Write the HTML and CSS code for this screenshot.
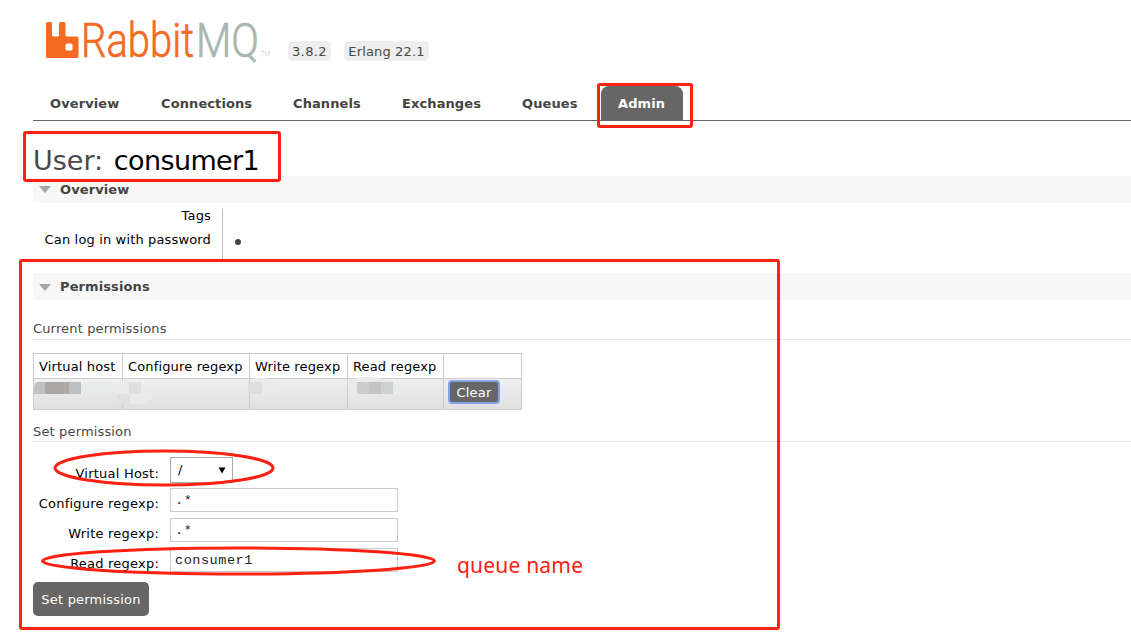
FILE: index.html
```html
<!DOCTYPE html>
<html lang="en">
<head>
<meta charset="utf-8">
<title>RabbitMQ Management</title>
<link rel="stylesheet" href="styles.css">
</head>
<body>
<header class="header">
  <svg class="logo" width="230" height="52" viewBox="0 0 230 52">
    <path fill="#f56a23" d="M1 8.500Q1 7 2.500 7H6Q7 7 7 8.500V20Q7 21.500 8.500 21.500H12.500Q14 21.500 14 20V8.500Q14 7 15.500 7H19Q20.500 7 20.500 8.500V20Q20.500 21.500 22 21.500H32Q33.500 21.500 33.500 23V41.500Q33.500 43 32 43H2.500Q1 43 1 41.500ZM22 28.500Q20.500 28.500 20.500 30V34Q20.500 35.500 22 35.500H26Q27.500 35.500 27.500 34V30Q27.500 28.500 26 28.500Z" fill-rule="evenodd"/>
    <text class="logo-rabbit" x="36" y="42" textLength="113" lengthAdjust="spacingAndGlyphs">Rabbit</text>
    <text class="logo-mq" x="151" y="42" textLength="63" lengthAdjust="spacingAndGlyphs">MQ</text>
    <text class="logo-tm" x="216" y="41" textLength="9" lengthAdjust="spacingAndGlyphs">TM</text>
  </svg>
  <span class="badge badge-version">3.8.2</span>
  <span class="badge badge-erlang">Erlang 22.1</span>
</header>
<nav class="tabs">
  <a class="tab w-overview">Overview</a>
  <a class="tab w-connections">Connections</a>
  <a class="tab w-channels">Channels</a>
  <a class="tab w-exchanges">Exchanges</a>
  <a class="tab w-queues">Queues</a>
  <a class="tab tab-active">Admin</a>
</nav>
<main class="main">
  <h1 class="title">User: <b>consumer1</b></h1>
  <h2 class="section">Overview</h2>
  <div class="facts">
    <div class="fact-names"><span class="tags">Tags</span><span>Can log in with password</span></div>
    <div class="fact-values"><i class="dot"></i></div>
  </div>
  <h2 class="section section-low">Permissions</h2>
  <h3 class="sub sub-current">Current permissions</h3>
  <table class="permissions">
    <colgroup><col class="c1"><col class="c2"><col class="c3"><col class="c4"><col class="c5"></colgroup>
    <tr><th>Virtual host</th><th>Configure regexp</th><th>Write regexp</th><th>Read regexp</th><th></th></tr>
    <tr class="row">
      <td><span class="mask"><i class="m1"></i><i class="m2"></i><i class="m3"></i></span></td>
      <td><span class="mask mask-b"><i class="m5"></i></span></td>
      <td><span class="mask mask-c"><i class="m6"></i></span></td>
      <td><span class="mask mask-d"><i class="m4"></i><i class="m3b"></i><i class="m4b"></i></span></td>
      <td><button class="clear">Clear</button></td>
    </tr>
  </table>
  <h3 class="sub sub-set">Set permission</h3>
  <form class="form">
    <label class="label-host">Virtual Host:</label><div class="select"><span>/</span><svg width="8" height="7" viewBox="0 0 8 7"><path d="M.5 .5h7L4 6.500z"/></svg></div>
    <label>Configure regexp:</label><div class="input">.*</div>
    <label>Write regexp:</label><div class="input">.*</div>
    <label>Read regexp:</label><div class="input">consumer1</div>
  </form>
  <button class="submit">Set permission</button>
</main>
<svg class="annotations" width="1131" height="634" viewBox="0 0 1131 634">
  <g fill="#e9eaea">
    <rect x="81" y="382" width="34" height="12" rx="4"/>
    <path d="M121 381h8v13h-12v-7q0-5 4-6z"/>
    <path fill="#e0e0e0" d="M117 394h12v11h-7q-5-3-5-7z"/>
    <path d="M129 394h23q-1 10-14 10h-9z"/>
    <path d="M250 380q7-4 18-1l12 3v11h-18v-11h-12z"/>
    <path fill="#dedede" d="M248 382h5v12h-5z"/>
    <path d="M350 381q9-6 25-4l20 5q7 1 9 7-1 5-11 5v-12h-36v12h-7q-3-6 0-13z"/>
  </g>
  <g fill="none" stroke="#ff2012" stroke-width="3">
    <rect x="598.500" y="84.500" width="93" height="42" rx="1.500"/>
    <rect x="24.500" y="132.500" width="255" height="48" rx="1.500"/>
    <rect x="20.500" y="260.500" width="758" height="368" rx="1.500"/>
    <ellipse cx="164" cy="468" rx="109" ry="17"/>
    <ellipse cx="238.500" cy="561" rx="196" ry="13"/>
  </g>
  <text class="note" x="457" y="573" textLength="126">queue name</text>
</svg>
</body>
</html>
```
FILE: styles.css
```css
* { box-sizing: border-box; }
body {
  margin: 0;
  width: 1131px;
  height: 634px;
  overflow: hidden;
  background: #fff;
  color: #000;
  font: 13px/16px Verdana, "DejaVu Sans", sans-serif;
  letter-spacing: .15px;
}
.header { display: flex; height: 83px; padding-left: 45px; }
.logo { margin-top: 15px; flex: none; letter-spacing: 0; }
.logo text { font-family: Roboto, sans-serif; font-weight: 300; font-size: 49px; stroke-width: .7px; }
.logo .logo-rabbit { fill: #f56a23; stroke: #f56a23; }
.logo .logo-mq { fill: #a9b7b0; stroke: #a9b7b0; }
.logo .logo-tm { fill: #b9c2be; font-size: 7px; }
.badge {
  height: 20px;
  margin: 41px 0 0 13px;
  border-radius: 5px;
  background: #eee;
  color: #484848;
  line-height: 21px;
  text-align: center;
  white-space: nowrap;
}
.badge-version { width: 43px; letter-spacing: .4px; }
.badge-erlang { width: 85px; }
.tabs {
  display: flex;
  height: 38px;
  margin-left: 33px;
  padding-top: 3px;
  border-bottom: 1px solid #666;
}
.tab {
  height: 34px;
  padding-left: 17px;
  color: #444;
  font-weight: bold;
  line-height: 35px;
  letter-spacing: .1px;
  white-space: nowrap;
}
.w-overview { width: 111px; }
.w-connections { width: 132px; }
.w-channels { width: 108px; }
.w-exchanges { width: 121px; padding-left: 18px; }
.w-queues { width: 96px; }
.tab-active { width: 82px; border-radius: 8px 8px 0 0; background: #666; color: #fff; }
.main { padding-left: 33px; }
.title {
  height: 55px;
  margin: 0;
  padding-top: 23px;
  color: #484848;
  font-size: 27px;
  font-weight: normal;
  line-height: 34px;
  letter-spacing: 0;
  white-space: nowrap;
}
.title b { margin-left: 2px; color: #000; font-weight: normal; letter-spacing: -.6px; }
.section {
  display: flex;
  align-items: center;
  height: 27px;
  margin: 0;
  padding-left: 6px;
  background: #f7f7f7;
  color: #444;
  font-size: 13px;
  letter-spacing: .1px;
}
.section-low { padding-top: 1px; }
.section::before {
  content: "";
  margin-right: 9px;
  border: 6px solid transparent;
  border-top: 7px solid #a6a6a6;
  border-bottom: 0;
}
.facts { display: flex; height: 70px; padding: 6px 0 14px; }
.fact-names {
  display: flex;
  flex-direction: column;
  gap: 8px;
  width: 190px;
  padding-right: 11px;
  border-right: 1px solid #bbb;
  line-height: 15px;
  text-align: right;
  white-space: nowrap;
}
.fact-names span { height: 16px; line-height: 14px; }
.fact-values { padding: 30px 0 0 12px; }
.dot { display: block; width: 6px; height: 6px; border-radius: 50%; background: #444; }
.sub {
  margin: 0;
  border-bottom: 1px solid #e4e4e4;
  color: #484848;
  font-size: 13px;
  font-weight: normal;
}
.sub-current { height: 40px; padding-top: 21px; }
.sub-set { height: 32px; padding-top: 14px; }
.permissions {
  width: 489px;
  margin-top: 13px;
  border-collapse: collapse;
  table-layout: fixed;
}
.c1 { width: 89px; }
.c2 { width: 127px; }
.c3 { width: 98px; }
.c4 { width: 96px; }
.c5 { width: 78px; }
.permissions th {
  height: 25px;
  padding: 2px 0 0 5px;
  border: 1px solid #ccc;
  font-weight: normal;
  text-align: left;
  white-space: nowrap;
}
.permissions td { height: 31px; padding: 0 0 0 4px; border: 1px solid #ccc; vertical-align: top; }
.row { background: linear-gradient(#f0f0f0, #dfdfdf); }
.mask { display: flex; height: 12px; margin: 3px 0 0 -4px; }
.mask-b { margin-left: 2px; }
.mask-c { margin-left: -4px; }
.mask-d { margin-left: 5px; }
.m1 { width: 11px; background: #c1c1c3; border-radius: 5px 0 0 0; }
.m2 { width: 24px; background: #aca8a6; }
.m3 { width: 12px; background: #bebfc1; }
.m4 { width: 12px; background: #cbcbcb; }
.m3b { width: 12px; background: #c3c3c2; }
.m4b { width: 12px; background: #d0d2d1; }
.m5 { width: 12px; background: #dfdfdf; }
.m6 { width: 12px; background: #dedede; }
button {
  display: block;
  margin: 0;
  padding: 2px 0 0;
  border: 0;
  background: #666;
  color: #fff;
  font: inherit;
  letter-spacing: .2px;
  white-space: nowrap;
}
.clear {
  width: 52px;
  height: 24px;
  margin-top: 1px;
  border: 2px solid #80a5ed;
  border-radius: 4px;
}
.form {
  display: grid;
  grid-template-columns: 126px 228px;
  grid-template-rows: 25px 24px 24px 24px;
  row-gap: 6px;
  column-gap: 11px;
  height: 125px;
  margin-top: 15px;
}
.form label { padding-top: 8px; letter-spacing: .22px; text-align: right; white-space: nowrap; }
.form .label-host { padding-top: 9px; }
.input {
  padding-left: 4px;
  border: 1px solid #ccc;
  color: #222;
  font: 13.500px/24px "Liberation Mono", monospace;
  letter-spacing: .55px;
}
.select {
  display: flex;
  justify-content: space-between;
  align-items: center;
  width: 63px;
  height: 26px;
  padding: 0 6px 0 7px;
  border: 1px solid #aaa;
}
.submit { width: 116px; height: 34px; border-radius: 5px; }
.annotations { position: absolute; left: 0; top: 0; letter-spacing: 0; }
.note { fill: #ff2012; font: 21px "Noto Sans", sans-serif; }
```
